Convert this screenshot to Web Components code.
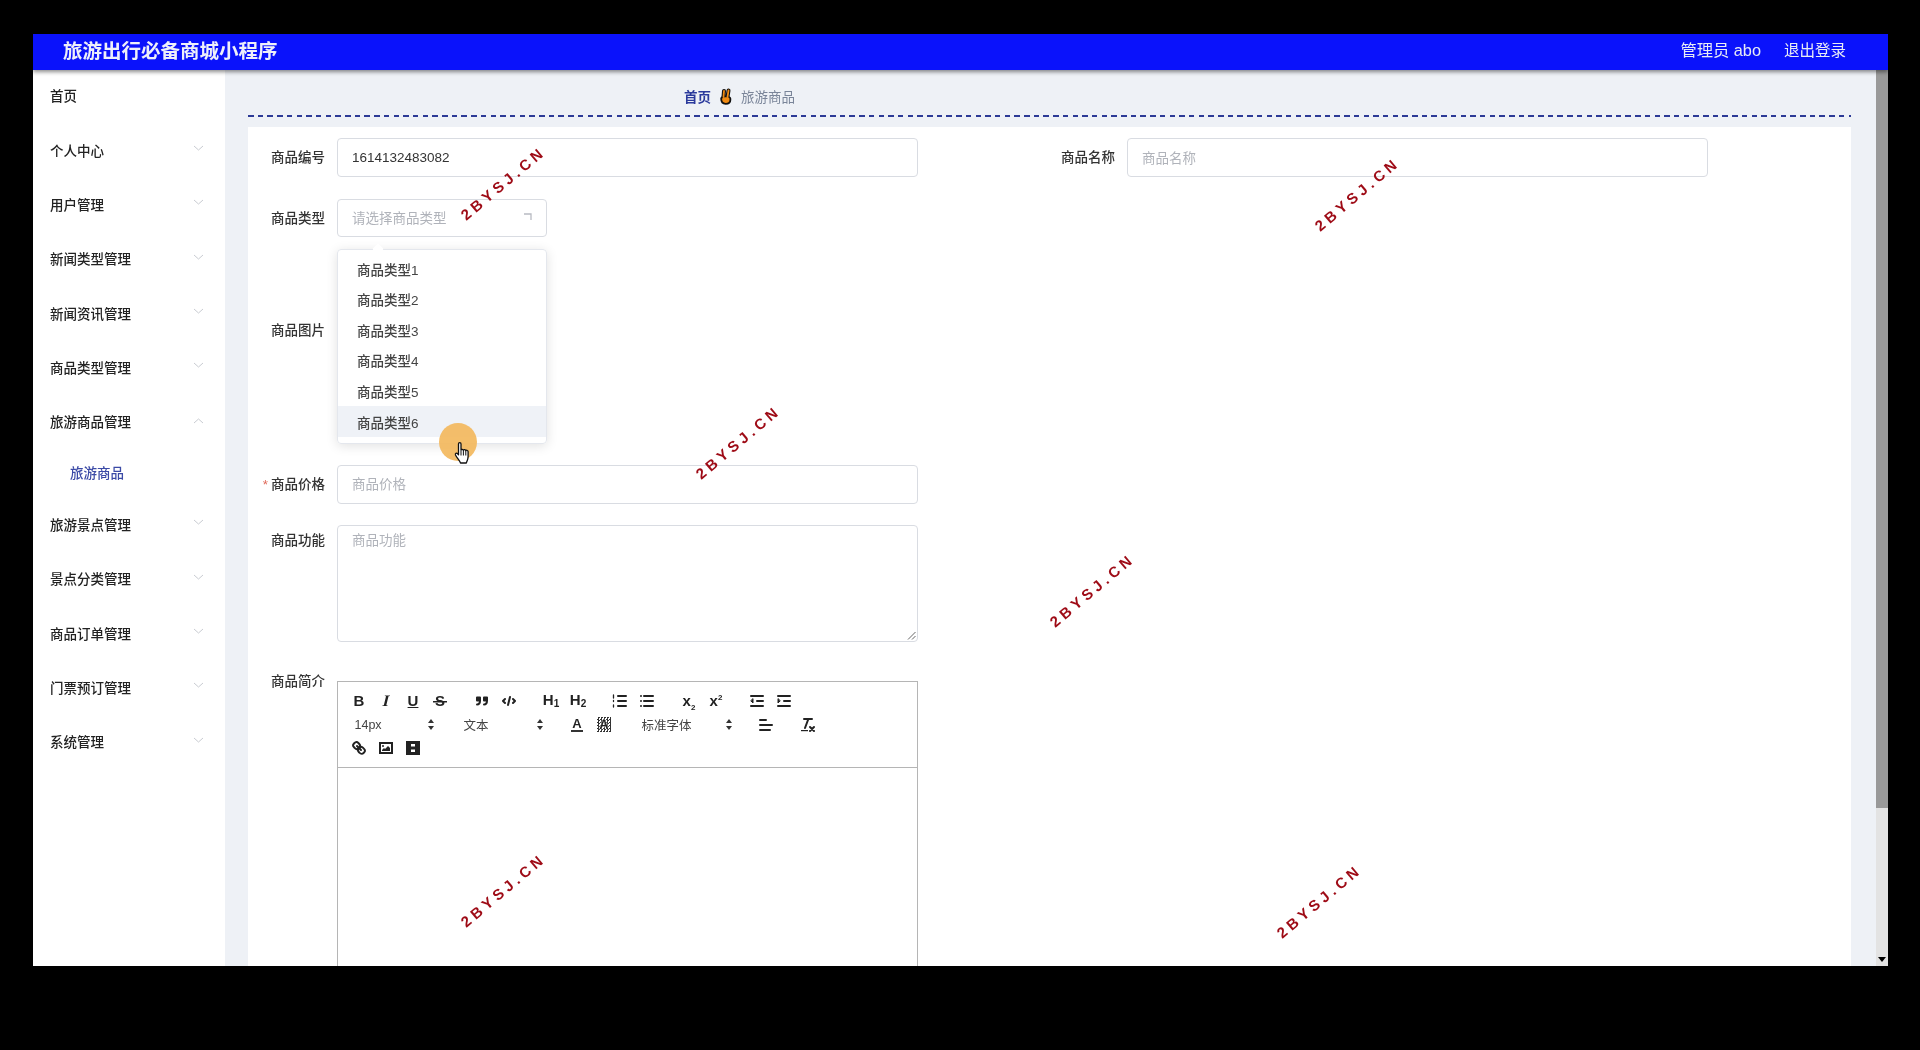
<!DOCTYPE html>
<html lang="zh">
<head>
<meta charset="utf-8">
<title>旅游出行必备商城小程序</title>
<style>
  html, body { margin: 0; height: 100%; background: #000; overflow: hidden; }
  body { font-family: "Liberation Sans", "Noto Sans CJK SC", sans-serif; font-size: 13.5px; color: #333; }
</style>
</head>
<body>
<app-frame>
  <app-header slot="header" title-text="旅游出行必备商城小程序" user="管理员 abo" action="退出登录"></app-header>
  <side-menu slot="side">
    <menu-item kind="home">首页</menu-item>
    <menu-item arrow="down">个人中心</menu-item>
    <menu-item arrow="down">用户管理</menu-item>
    <menu-item arrow="down">新闻类型管理</menu-item>
    <menu-item arrow="down">新闻资讯管理</menu-item>
    <menu-item arrow="down">商品类型管理</menu-item>
    <menu-item arrow="up">旅游商品管理</menu-item>
    <menu-item kind="sub">旅游商品</menu-item>
    <menu-item arrow="down">旅游景点管理</menu-item>
    <menu-item arrow="down">景点分类管理</menu-item>
    <menu-item arrow="down">商品订单管理</menu-item>
    <menu-item arrow="down">门票预订管理</menu-item>
    <menu-item arrow="down">系统管理</menu-item>
  </side-menu>
  <bread-crumb slot="crumb" home="首页" current="旅游商品"></bread-crumb>
  <form-card slot="card">
    <div style="display:flex;gap:120px">
      <form-field label="商品编号"><text-box value="1614132483082"></text-box></form-field>
      <form-field label="商品名称"><text-box placeholder="商品名称"></text-box></form-field>
    </div>
    <form-field label="商品类型">
      <select-box placeholder="请选择商品类型">
        <span>商品类型1</span><span>商品类型2</span><span>商品类型3</span><span>商品类型4</span><span>商品类型5</span><span>商品类型6</span>
      </select-box>
    </form-field>
    <form-field label="商品图片" align="image"><upload-box hint="点击上传商品图片"></upload-box></form-field>
    <form-field label="商品价格" required><text-box placeholder="商品价格"></text-box></form-field>
    <form-field label="商品功能" align="top"><area-box placeholder="商品功能"></area-box></form-field>
    <form-field label="商品简介" align="top" class="intro"><rich-editor></rich-editor></form-field>
  </form-card>
  <water-mark slot="over" x="470" y="149"></water-mark>
  <water-mark slot="over" x="1324" y="160"></water-mark>
  <water-mark slot="over" x="705" y="408"></water-mark>
  <water-mark slot="over" x="1059" y="556"></water-mark>
  <water-mark slot="over" x="470" y="856"></water-mark>
  <water-mark slot="over" x="1286" y="867"></water-mark>
  <cursor-spot slot="over" x="424" y="408"></cursor-spot>
</app-frame>

<script>
class AppFrame extends HTMLElement {
  constructor() {
    super()
    this.attachShadow({ mode: "open" })
    this.shadowRoot.innerHTML = `
      <style>
        :host { display: block; position: relative; box-sizing: border-box; width: 1855px; height: 932px; margin: 34px 32px 84px 33px; background: #fff; overflow: hidden; filter: blur(.35px); }
        .body { display: flex; height: 896px; }
        .main { flex: 1; min-width: 0; background: #eef1f6; padding: 0 25px 0 23px; overflow: hidden; }
        .bar { width: 12px; display: flex; flex-direction: column; background: #e3e3e3; }
        .thumb { height: 738px; background: #999; }
        .track { flex: 1; display: flex; align-items: flex-end; justify-content: center; padding-bottom: 4px; }
      </style>
      <slot name="header"></slot>
      <div class="body">
        <slot name="side"></slot>
        <div class="main">
          <slot name="crumb"></slot>
          <slot name="card"></slot>
        </div>
        <div class="bar">
          <div class="thumb"></div>
          <div class="track"><svg width="8" height="5" viewBox="0 0 8 5"><path d="M0 0h8L4 5z" fill="#000"/></svg></div>
        </div>
      </div>
      <slot name="over"></slot>
    `
  }
}

class AppHeader extends HTMLElement {
  constructor() {
    super()
    this.attachShadow({ mode: "open" })
  }
  connectedCallback() {
    this.shadowRoot.innerHTML = `
      <style>
        :host { display: flex; position: relative; z-index: 2; align-items: center; justify-content: space-between; box-sizing: border-box; height: 36px; padding: 0 42px 5px 30px; background: #0a12fb; box-shadow: 0 2px 4px rgba(0,0,0,.45); color: #e8ecf5; }
        .title { font-size: 19.5px; font-weight: 700; color: #eef0fa; }
        .right { display: flex; align-items: baseline; gap: 23px; margin-top: -1px; font-size: 15.5px; }
        .user { font-size: 16.3px; }
      </style>
      <div class="title">${this.getAttribute("title-text")}</div>
      <div class="right"><span class="user">${this.getAttribute("user")}</span><span>${this.getAttribute("action")}</span></div>
    `
  }
}

class SideMenu extends HTMLElement {
  constructor() {
    super()
    this.attachShadow({ mode: "open" })
    this.shadowRoot.innerHTML = `
      <style>:host { display: block; flex: none; width: 192px; background: #fff; }</style>
      <slot></slot>
    `
  }
}

class MenuItem extends HTMLElement {
  constructor() {
    super()
    this.attachShadow({ mode: "open" })
  }
  connectedCallback() {
    const arrow = this.getAttribute("arrow")
    const d = arrow === "up" ? "M1 6l4.5-4 4.5 4" : "M1 1l4.5 4 4.5-4"
    this.shadowRoot.innerHTML = `
      <style>
        :host { display: flex; align-items: center; justify-content: space-between; box-sizing: border-box; height: 54.3px; padding: 0 21px 2px 17px; font-size: 13.5px; font-weight: 500; color: #222; }
        :host([kind="home"]) { height: 51px; margin-bottom: 2.5px; }
        :host([kind="sub"]) { height: 48.5px; padding: 0 21px 4px 37px; color: #3b4aa6; }
        svg { margin-top: -2px; }
      </style>
      <span><slot></slot></span>
      ${arrow ? `<svg width="11" height="7" viewBox="0 0 11 7"><path d="${d}" fill="none" stroke="#c9ccd2" stroke-width="1"/></svg>` : ""}
    `
  }
}

class BreadCrumb extends HTMLElement {
  constructor() {
    super()
    this.attachShadow({ mode: "open" })
  }
  connectedCallback() {
    this.shadowRoot.innerHTML = `
      <style>
        :host { display: flex; align-items: center; box-sizing: border-box; height: 47px; padding: 7px 0 2px 436px; background: repeating-linear-gradient(90deg, #2c3a96 0 5.5px, transparent 5.5px 9.7px) left bottom / 100% 2px no-repeat; font-size: 13.5px; }
        .home { font-weight: 700; color: #2b3a9c; }
        .now { color: #7a8599; }
        svg { margin: 0 9px 0 8px; }
      </style>
      <span class="home">${this.getAttribute("home")}</span>
      <svg width="13" height="17" viewBox="0 0 13 17" fill="none" stroke-linecap="round">
        <path d="M4.500 9L5 3M8.500 9L9.500 2.500" stroke="#111" stroke-width="4"/>
        <path d="M2 10.500C2 8 11 7.500 11.500 10.500V12c0 2.500-2 4-4.800 4C3.500 16 2 13.500 2 10.500z" fill="#111" stroke="#111" stroke-width="1.500"/>
        <path d="M4.500 9L5 3M8.500 9L9.500 2.500" stroke="#f08a12" stroke-width="1.800"/>
        <path d="M3 10.800C3 9 10.500 8.500 10.500 10.800V12c0 2-1.500 3-3.800 3C4.200 15 3 13 3 10.800z" fill="#f08a12"/>
      </svg>
      <span class="now">${this.getAttribute("current")}</span>
    `
  }
}

class FormCard extends HTMLElement {
  constructor() {
    super()
    this.attachShadow({ mode: "open" })
    this.shadowRoot.innerHTML = `
      <style>
        :host { display: block; margin-top: 10px; padding-top: 11px; height: 900px; background: #fff; }
        ::slotted(*) { margin-bottom: 21.500px; }
      </style>
      <slot></slot>
    `
  }
}

class FormField extends HTMLElement {
  constructor() {
    super()
    this.attachShadow({ mode: "open" })
  }
  connectedCallback() {
    const required = this.hasAttribute("required")
    this.shadowRoot.innerHTML = `
      <style>
        :host { display: flex; align-items: center; gap: 12px; width: 670px; }
        :host([align="top"]) { align-items: flex-start; }
        :host([align="image"]) { align-items: flex-start; }
        .label { flex: none; width: 77px; text-align: right; font-size: 13.5px; font-weight: 500; color: #333; line-height: 38px; padding-top: 1px; }
        :host([align="top"]) .label { line-height: 32px; padding-top: 0; }
        :host(.intro) .label { line-height: 35px; }
        :host([align="image"]) .label { margin-top: 52px; }
        .req { color: #e06a5a; margin-right: 3px; }
        .control { flex: 1; min-width: 0; }
      </style>
      <div class="label">${required ? '<span class="req">*</span>' : ""}${this.getAttribute("label")}</div>
      <div class="control"><slot></slot></div>
    `
  }
}

class TextBox extends HTMLElement {
  constructor() {
    super()
    this.attachShadow({ mode: "open" })
  }
  connectedCallback() {
    const value = this.getAttribute("value")
    this.shadowRoot.innerHTML = `
      <style>
        :host { display: flex; align-items: center; box-sizing: border-box; height: 39px; padding: 0 15px 2px 14px; border: 1px solid #d9dce2; border-radius: 4px; background: #fff; font-size: 13.5px; }
        .ph { color: #b0b3ba; }
        .val { padding-top: 2px; }
      </style>
      ${value ? `<span class="val">${value}</span>` : `<span class="ph">${this.getAttribute("placeholder")}</span>`}
    `
  }
}

class SelectBox extends HTMLElement {
  constructor() {
    super()
    this.attachShadow({ mode: "open" })
  }
  connectedCallback() {
    this.shadowRoot.innerHTML = `
      <style>
        :host { display: block; position: relative; box-sizing: border-box; width: 210px; height: 38.500px; border: 1px solid #d9dce2; border-radius: 4px; background: #fff; font-size: 13.5px; z-index: 1; }
        .head { display: flex; align-items: center; justify-content: space-between; box-sizing: border-box; height: 100%; padding: 0 14px 2px; color: #b0b3ba; }
        .pop { position: absolute; left: -1px; top: 49px; box-sizing: border-box; width: 210px; height: 195px; padding-top: 3.500px; background: rgba(255,255,255,.95); border: 1px solid #e4e7ed; border-radius: 4px; box-shadow: 0 2px 12px rgba(0,0,0,.12); }
        .pop::before { content: ""; position: absolute; top: -5px; left: 36px; width: 8px; height: 8px; background: #fff; transform: rotate(45deg); border-radius: 1px; }
        ::slotted(span) { display: flex; align-items: center; height: 30.600px; padding-left: 19px; color: #444; font-weight: 500; }
        ::slotted(span:last-child) { background: rgba(238,241,246,.92); }
      </style>
      <div class="head">
        <span>${this.getAttribute("placeholder")}</span>
        <svg width="8" height="8" viewBox="0 0 8 8"><path d="M0 1h7v6" fill="none" stroke="#b8bbc2" stroke-width="1.300"/></svg>
      </div>
      <div class="pop"><slot></slot></div>
    `
  }
}

class UploadBox extends HTMLElement {
  constructor() {
    super()
    this.attachShadow({ mode: "open" })
  }
  connectedCallback() {
    this.shadowRoot.innerHTML = `
      <style>
        :host { display: block; height: 184px; }
        .hint { padding-top: 158px; color: #9aa0aa; font-size: 13px; line-height: 18px; }
      </style>
      <div class="hint">${this.getAttribute("hint")}</div>
    `
  }
}

class AreaBox extends HTMLElement {
  constructor() {
    super()
    this.attachShadow({ mode: "open" })
  }
  connectedCallback() {
    this.shadowRoot.innerHTML = `
      <style>
        :host { display: block; position: relative; box-sizing: border-box; height: 117px; padding: 5px 14px; border: 1px solid #d9dce2; border-radius: 4px; background: #fff; color: #b0b3ba; font-size: 13.5px; line-height: 20px; }
        svg { position: absolute; right: 1px; bottom: 1px; }
      </style>
      ${this.getAttribute("placeholder")}
      <svg width="9" height="9" viewBox="0 0 9 9"><path d="M8.500 1L1 8.500M8.500 5L5 8.500" stroke="#666" fill="none"/></svg>
    `
  }
}

const lines = (d) => `<svg width="18" height="18" viewBox="0 0 18 18" fill="none" stroke="#222" stroke-width="2" stroke-linecap="round" stroke-linejoin="round">${d}</svg>`
const editorIcons = {
  bold: `<b class="t">B</b>`,
  italic: `<i class="t serif">I</i>`,
  under: `<u class="t">U</u>`,
  strike: `<span class="t strike">S</span>`,
  quote: lines(`<rect x="4" y="5.500" width="3" height="3" fill="#222"/><rect x="11" y="5.500" width="3" height="3" fill="#222"/><path d="M7 8.500c0 2.500-1.500 4-3 4M14 8.500c0 2.500-1.500 4-3 4"/>`),
  code: lines(`<path d="M5 7L3 9l2 2M13 7l2 2-2 2M10 5L8 13"/>`),
  h1: `<b class="t">H<small>1</small></b>`,
  h2: `<b class="t">H<small>2</small></b>`,
  ol: lines(`<path d="M7 4h8M7 9h8M7 14h8"/><path d="M2.500 3v3M2.500 8.500v1M2.500 13v2" stroke-width="1.300"/>`),
  ul: lines(`<path d="M6 4h9M6 9h9M6 14h9M3 4h0M3 9h0M3 14h0"/>`),
  sub: `<b class="t x">x<sub>2</sub></b>`,
  sup: `<b class="t x">x<sup>2</sup></b>`,
  outdent: lines(`<path d="M3 4h12M3 14h12M9 9h6"/><path d="M5 7v4L3 9z" fill="#222" stroke-width="1"/>`),
  indent: lines(`<path d="M3 4h12M3 14h12M9 9h6"/><path d="M3 7v4l2-2z" fill="#222" stroke-width="1"/>`),
  color: `<b class="t under">A</b>`,
  background: `<b class="t dots">A</b>`,
  align: lines(`<path d="M3 4h6M3 9h12M3 14h10"/>`),
  clean: `<svg width="18" height="18" viewBox="0 0 18 18" fill="none" stroke="#222" stroke-width="2" stroke-linecap="round"><path d="M5 3h8M6 12L9.350 3"/><path d="M11 11l4 4M15 11l-4 4"/><rect x="2" y="14" width="7" height="1.200" fill="#222" stroke="none"/></svg>`,
  link: lines(`<path d="M7 7l4 4"/><path d="M8.900 4.600a3.500 3.500 0 0 1 .4 4.700 3.500 3.500 0 0 1-4.700-.4C3.200 7.500 2 6.400 4.200 4.200S7.500 3.200 8.900 4.600z"/><path d="M13.400 9.100a3.500 3.500 0 0 0-4.700-.4 3.500 3.500 0 0 0 .4 4.700c1.400 1.400 2.500 2.500 4.700.4s1-3.300-.4-4.700z"/>`),
  image: `<svg width="18" height="18" viewBox="0 0 18 18"><rect x="3" y="4" width="12" height="10" fill="#fff" stroke="#222" stroke-width="2"/><circle cx="6" cy="7" r="1" fill="#222"/><path d="M5 12v-1l2-2 1 1 3-3 2 2v3z" fill="#222"/></svg>`,
  video: `<svg width="18" height="18" viewBox="0 0 18 18"><rect x="3" y="3" width="12" height="12" fill="#222" stroke="#222" stroke-width="2"/><path d="M7 5h4v2.500H7zM7 10.500h4V13H7z" fill="#fff"/></svg>`,
}

class RichEditor extends HTMLElement {
  constructor() {
    super()
    this.attachShadow({ mode: "open" })
  }
  button(name) {
    return `<span class="btn">${editorIcons[name]}</span>`
  }
  picker(text, width) {
    return `<span class="pick" style="width:${width}px"><span>${text}</span>
      <svg width="8" height="13" viewBox="0 0 8 13"><path d="M4 1l3 4H1zM4 12L1 8h6z" fill="#333"/></svg></span>`
  }
  group(...names) {
    return `<span class="grp">${names.map((n) => this.button(n)).join("")}</span>`
  }
  connectedCallback() {
    this.shadowRoot.innerHTML = `
      <style>
        :host { display: block; margin-top: 17px; box-sizing: border-box; height: 500px; border: 1px solid #b5b5b5; background: #fff; }
        .bar { box-sizing: border-box; height: 86px; padding: 8px 7.500px 0; border-bottom: 1px solid #b5b5b5; }
        .row { display: flex; height: 23.500px; align-items: center; }
        .row:first-child .grp:nth-child(5) { margin-right: 14px; }
        .grp { display: flex; margin-right: 15px; }
        .btn { display: flex; align-items: center; justify-content: center; width: 27px; height: 23px; }
        .t { font: 700 15px/18px "Liberation Sans", sans-serif; color: #222; }
        .serif { font-family: "Liberation Serif", serif; font-size: 16px; display: inline-block; transform: skewX(-14deg); }
        .strike { padding: 0 2px; background: linear-gradient(#222, #222) center 9px / 100% 1.5px no-repeat; }
        .t small { font-size: 10px; position: relative; top: 2px; }
        .x { font-size: 15px; }
        .x sub, .x sup { font-size: 8px; line-height: 0; }
        .under { border-bottom: 2px solid #333; line-height: 13px; font-size: 13px; padding: 0 1px; }
        .dots { padding: 1px 2px; line-height: 13px; font-size: 13px; text-shadow: 0 0 2px #fff, 0 0 1px #fff; background: repeating-conic-gradient(#333 0 25%, #fff 0 50%) 0 0 / 3px 3px; }
        .pick { display: flex; align-items: center; justify-content: space-between; box-sizing: border-box; margin-right: 15px; padding: 0 5px 0 9px; font-size: 12.5px; color: #444; }
        .pick span { font-weight: 400; }
      </style>
      <div class="bar">
        <div class="row">
          ${this.group("bold", "italic", "under", "strike")}
          ${this.group("quote", "code")}
          ${this.group("h1", "h2")}
          ${this.group("ol", "ul")}
          ${this.group("sub", "sup")}
          ${this.group("outdent", "indent")}
        </div>
        <div class="row">
          ${this.picker("14px", 94)}
          ${this.picker("文本", 94)}
          ${this.group("color", "background")}
          ${this.picker("标准字体", 105)}
          ${this.group("align")}
          ${this.group("clean")}
        </div>
        <div class="row">${this.group("link", "image", "video")}</div>
      </div>
    `
  }
}

class WaterMark extends HTMLElement {
  constructor() {
    super()
    this.attachShadow({ mode: "open" })
  }
  connectedCallback() {
    this.shadowRoot.innerHTML = `
      <style>
        :host { position: absolute; left: ${this.getAttribute("x")}px; top: ${this.getAttribute("y")}px; z-index: 3; transform: translate(-50%, -50%) rotate(-40deg); white-space: nowrap; font: 700 15px "Liberation Sans", sans-serif; letter-spacing: 4px; color: #9e0b16; }
      </style>
      2BYSJ.CN
    `
  }
}

class CursorSpot extends HTMLElement {
  constructor() {
    super()
    this.attachShadow({ mode: "open" })
  }
  connectedCallback() {
    this.shadowRoot.innerHTML = `
      <style>
        :host { position: absolute; left: ${this.getAttribute("x")}px; top: ${this.getAttribute("y")}px; z-index: 4; width: 38px; height: 38px; margin: -19px 0 0 -18px; border-radius: 50%; background: rgba(243,183,90,.9); }
        svg { position: absolute; left: 15px; top: 18px; }
      </style>
      <svg width="19" height="25" viewBox="0 0 19 24">
        <path d="M4.500 2.500c0-1.800 2.500-1.800 2.500 0v6c.2-1 2.200-1 2.400.3.300-1 2.200-.9 2.400.4.400-.8 2.200-.6 2.300.8V15c0 3-1.200 4.500-1.800 6.500H6.500C5.500 19 3 16.500 1.500 13.500c-.6-1.500 1-2.500 2.200-1.200l.8 1z" fill="#fff" stroke="#111" stroke-width="1.300" stroke-linejoin="round"/>
        <path d="M7 9v5M9.400 9v5M11.800 9.500V14" stroke="#111" fill="none"/>
      </svg>
    `
  }
}

customElements.define("app-frame", AppFrame)
customElements.define("app-header", AppHeader)
customElements.define("side-menu", SideMenu)
customElements.define("menu-item", MenuItem)
customElements.define("bread-crumb", BreadCrumb)
customElements.define("form-card", FormCard)
customElements.define("form-field", FormField)
customElements.define("text-box", TextBox)
customElements.define("select-box", SelectBox)
customElements.define("upload-box", UploadBox)
customElements.define("area-box", AreaBox)
customElements.define("rich-editor", RichEditor)
customElements.define("water-mark", WaterMark)
customElements.define("cursor-spot", CursorSpot)
</script>
</body>
</html>
